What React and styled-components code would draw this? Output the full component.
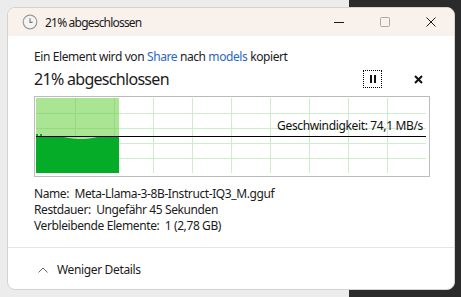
import React from "react";
import styled, { createGlobalStyle } from "styled-components";

const Global = createGlobalStyle`
  html, body { margin: 0; padding: 0; }
  body {
    width: 461px; height: 297px; overflow: hidden;
    background: linear-gradient(to right, #ececec 0, #ececec 349px, #2b2b2b 349px, #2b2b2b 100%);
    font-family: "Noto Sans", "Open Sans", sans-serif;
    color: #1b1b1b;
  }
`;

const Desktop = styled.div`
  padding: 7px 6px 7px 7px;
  box-sizing: border-box;
  width: 461px;
  height: 297px;
`;

const Window = styled.div`
  height: 283px;
  background: #ffffff;
  border: 1px solid #d6d2cf;
  border-radius: 8px;
  box-sizing: border-box;
  overflow: hidden;
  display: flex;
  flex-direction: column;
`;

const TitleBar = styled.div`
  height: 28px;
  flex: none;
  background: #f9f1ec;
  display: flex;
  align-items: center;
`;

const TitleIcon = styled.div`
  width: 30px;
  display: flex;
  justify-content: flex-end;
  svg { display: block; }
`;

const TitleText = styled.div`
  flex: 1;
  font-size: 12px;
  letter-spacing: -0.8px;
  padding-left: 7px;
  color: #1b1b1b;
`;

const CaptionButton = styled.div`
  width: 46px;
  height: 28px;
  display: flex;
  align-items: center;
  justify-content: center;
`;

const Content = styled.div`
  padding: 13px 26px 0 26px;
  flex: 1;
  display: flex;
  flex-direction: column;
`;

const Line = styled.div`
  font-size: 12px;
  line-height: 16px;
  letter-spacing: -0.4px;
  white-space: nowrap;
`;

const Link = styled.span`
  color: #2a66c5;
`;

const ProgressRow = styled.div`
  display: flex;
  align-items: center;
  height: 22px;
  margin-top: 3px;
`;

const Big = styled.div`
  flex: 1;
  font-size: 16px;
  line-height: 20px;
  letter-spacing: -0.7px;
`;

const PauseBtn = styled.div`
  width: 19px;
  height: 18px;
  box-sizing: border-box;
  border: 1px dotted #000;
  display: flex;
  align-items: center;
  justify-content: center;
  gap: 2px;
  margin-right: 28px;
`;

const PauseBar = styled.span`
  width: 2px;
  height: 8px;
  background: #111;
`;

const CloseSmall = styled.div`
  width: 16px;
  display: flex;
  justify-content: center;
  margin-right: 2px;
`;

const Graph = styled.div`
  position: relative;
  margin-top: 6px;
  width: 392px;
  height: 77px;
  border: 1px solid #bcbcbc;
  padding: 1px;
  svg { display: block; }
`;

const Speed = styled.div`
  position: absolute;
  right: 6px;
  top: 21px;
  font-size: 12px;
  line-height: 16px;
  letter-spacing: -0.35px;
  color: #111;
  white-space: nowrap;
`;

const Details = styled.div`
  margin-top: 9px;
  display: flex;
  flex-direction: column;
`;

const Footer = styled.div`
  margin-top: auto;
  height: 42px;
  flex: none;
  box-sizing: border-box;
  padding-top: 2px;
  border-top: 1px solid #e5e5e5;
  display: flex;
  align-items: center;
  padding-left: 30px;
  gap: 9px;
  font-size: 12px;
  letter-spacing: -0.35px;
`;

const W = 390;
const H = 75;

function Chart() {
  const vx = [];
  for (let x = 39; x < W; x += 39) vx.push(x);
  const hy = [15, 30, 45, 60];
  const fillW = 83;
  const lineY = 38;
  return (
    <svg width={W} height={H} viewBox={`0 0 ${W} ${H}`} shapeRendering="crispEdges">
      <rect x="0" y="0" width={W} height={H} fill="#ffffff" />
      <rect x="0" y="0" width={fillW} height={H} fill="#a9e592" />
      {vx.map((x) => (
        <rect key={"v" + x} x={x} y="0" width="1" height={H} fill={x < fillW ? "#93db7c" : "#cbefcb"} />
      ))}
      {hy.map((y) => (
        <React.Fragment key={"h" + y}>
          <rect x="0" y={y} width={fillW} height="1" fill="#93db7c" />
          <rect x={fillW} y={y} width={W - fillW} height="1" fill="#cbefcb" />
        </React.Fragment>
      ))}
      <path
        shapeRendering="geometricPrecision"
        d={`M0 ${lineY} L23 ${lineY} C30 ${lineY + 1}, 34 ${lineY + 3}, 45 ${lineY + 3} C56 ${lineY + 3}, 60 ${lineY + 1}, 65 ${lineY} L${fillW} ${lineY} L${fillW} ${H} L0 ${H} Z`}
        fill="#05ac27"
      />
      <rect x="0" y={lineY - 2} width="2" height="2" fill="#05ac27" />
      <rect x="4" y={lineY - 2} width="2" height="2" fill="#05ac27" />
      <rect x="0" y={lineY} width={W} height="1" fill="#000000" />
    </svg>
  );
}

export default function App() {
  return (
    <>
      <Global />
      <Desktop>
        <Window>
          <TitleBar>
            <TitleIcon>
              <svg width="16" height="16" viewBox="0 0 16 16">
                <circle cx="8" cy="8" r="6.8" fill="#f4f4f4" stroke="#9a9a9a" strokeWidth="1.2" />
                <path d="M8 4.2 V8.4 H10.6" fill="none" stroke="#7a7a7a" strokeWidth="1.1" />
              </svg>
            </TitleIcon>
            <TitleText>21% abgeschlossen</TitleText>
            <CaptionButton>
              <svg width="10" height="10" viewBox="0 0 10 10">
                <rect x="0" y="5" width="10" height="1" fill="#1b1b1b" />
              </svg>
            </CaptionButton>
            <CaptionButton>
              <svg width="10" height="10" viewBox="0 0 10 10">
                <rect x="0.5" y="0.5" width="9" height="9" rx="1" fill="none" stroke="#a8a8a8" />
              </svg>
            </CaptionButton>
            <CaptionButton>
              <svg width="10" height="10" viewBox="0 0 10 10">
                <path d="M0.5 0.5 L9.5 9.5 M9.5 0.5 L0.5 9.5" stroke="#1b1b1b" strokeWidth="1" />
              </svg>
            </CaptionButton>
          </TitleBar>
          <Content>
            <Line>
              Ein Element wird von <Link>Share</Link> nach <Link>models</Link> kopiert
            </Line>
            <ProgressRow>
              <Big>21% abgeschlossen</Big>
              <PauseBtn>
                <PauseBar />
                <PauseBar />
              </PauseBtn>
              <CloseSmall>
                <svg width="9" height="9" viewBox="0 0 9 9">
                  <path d="M1 1 L8 8 M8 1 L1 8" stroke="#111" strokeWidth="2" />
                </svg>
              </CloseSmall>
            </ProgressRow>
            <Graph>
              <Chart />
              <Speed>Geschwindigkeit: 74,1 MB/s</Speed>
            </Graph>
            <Details>
              <Line>Name:&nbsp; Meta-Llama-3-8B-Instruct-IQ3_M.gguf</Line>
              <Line>Restdauer:&nbsp; Ungefähr 45 Sekunden</Line>
              <Line>Verbleibende Elemente:&nbsp; 1 (2,78 GB)</Line>
            </Details>
          </Content>
          <Footer>
            <svg width="10" height="6" viewBox="0 0 10 6">
              <path d="M0.5 5.5 L5 1 L9.5 5.5" fill="none" stroke="#666" strokeWidth="1" />
            </svg>
            <span>Weniger Details</span>
          </Footer>
        </Window>
      </Desktop>
    </>
  );
}
